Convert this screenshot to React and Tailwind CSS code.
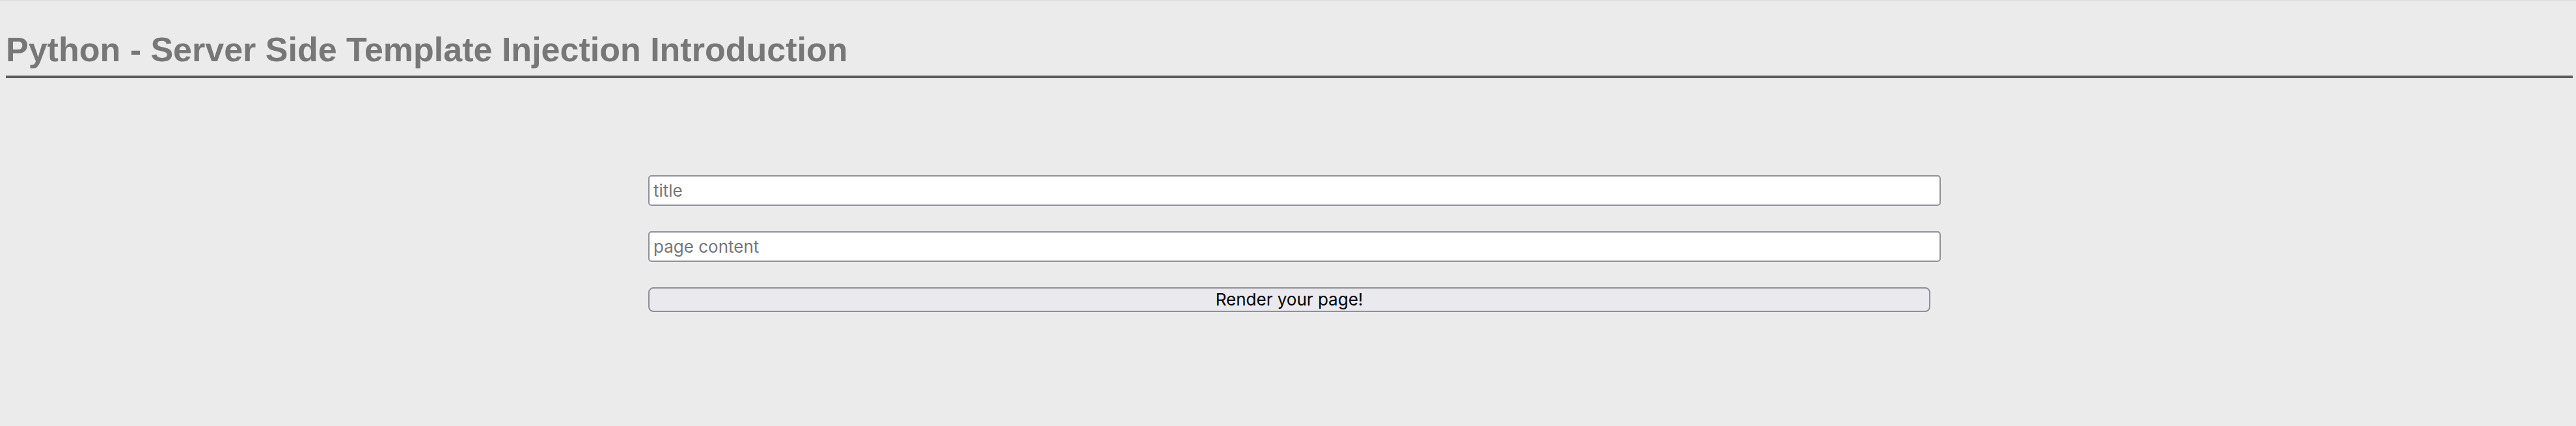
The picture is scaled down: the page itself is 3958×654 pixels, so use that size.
import React, { useState } from 'react';

const App = () => {
  const [title, setTitle] = useState('');
  const [content, setContent] = useState('');

  const handleSubmit = (e) => {
    e.preventDefault();
  };

  return (
    <div className="min-h-screen bg-[#ebebeb] border-t-2 border-[#dfdfdf] font-['Inter',sans-serif]">
      <h1 className="ml-[9px] mr-[5px] mt-[48px] pb-[14px] border-b-4 border-[#5c5c5c] text-[52px] leading-none font-bold text-[#777777] font-['Liberation_Sans',Arial,sans-serif]">
        Python - Server Side Template Injection Introduction
      </h1>

      <form onSubmit={handleSubmit} className="flex flex-col items-start gap-[39px] pl-[996px] pt-[149px]">
        <input
          type="text"
          name="title"
          value={title}
          placeholder="title"
          onChange={(e) => setTitle(e.target.value)}
          className="w-[1986px] h-[47px] px-[6px] bg-white border-2 border-[#8f8f99] rounded-[5px] text-[26px] text-black placeholder:text-[#767676] outline-none"
        />
        <input
          type="text"
          name="content"
          value={content}
          placeholder="page content"
          onChange={(e) => setContent(e.target.value)}
          className="w-[1986px] h-[47px] px-[6px] bg-white border-2 border-[#8f8f99] rounded-[5px] text-[26px] text-black placeholder:text-[#767676] outline-none"
        />
        <button
          type="submit"
          className="w-[1970px] h-[38px] bg-[#e9e9ee] border-2 border-[#8f8f99] rounded-[8px] text-[26px] leading-none text-black"
        >
          Render your page!
        </button>
      </form>
    </div>
  );
};

export default App;
